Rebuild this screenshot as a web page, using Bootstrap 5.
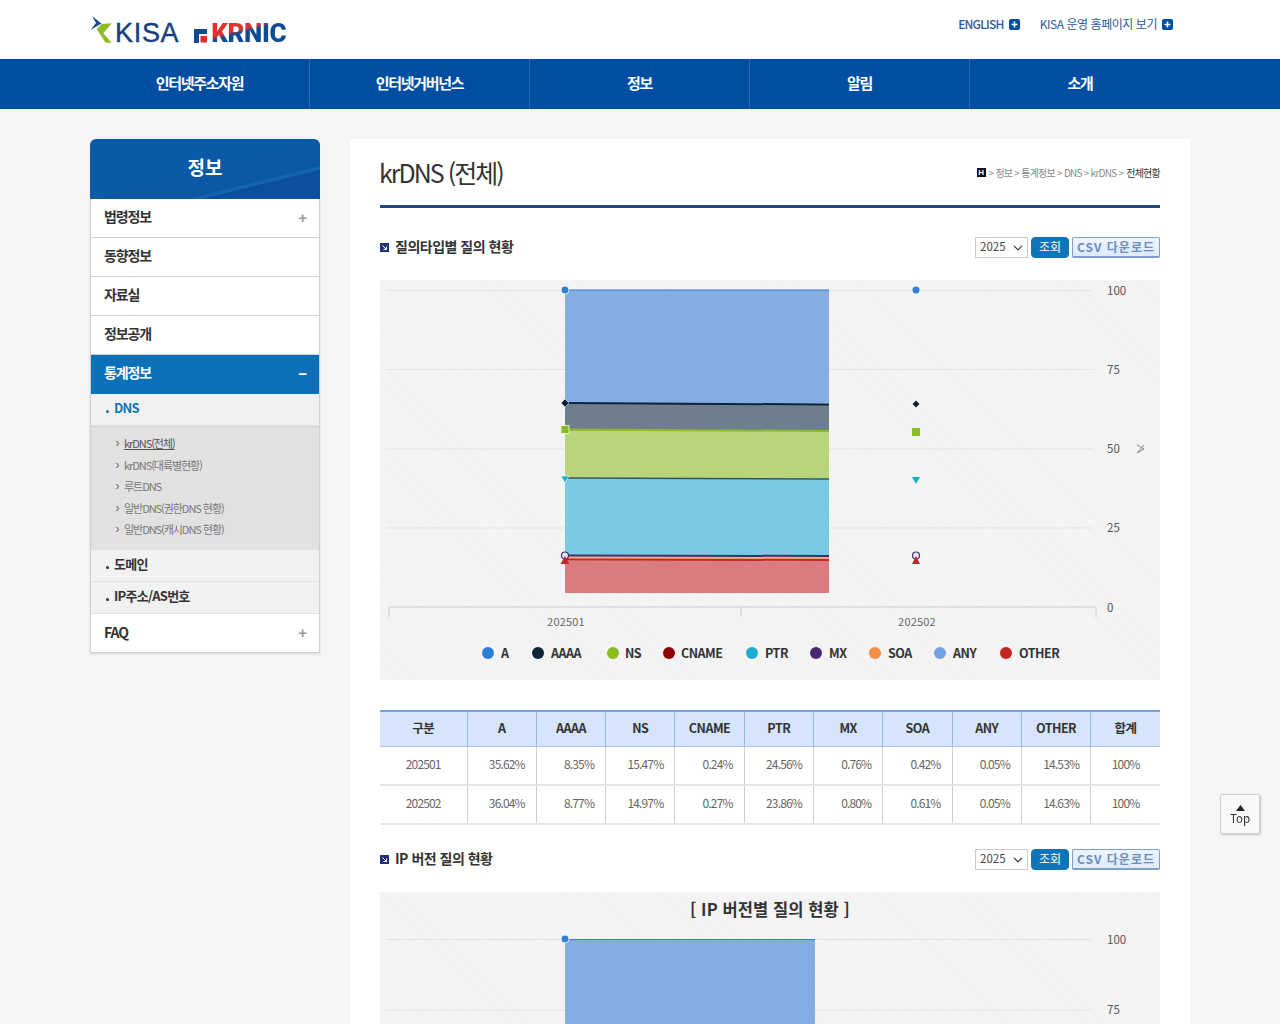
<!DOCTYPE html>
<html lang="ko">
<head>
<meta charset="utf-8">
<title>krDNS (전체)</title>
<link href="https://cdn.jsdelivr.net/npm/bootstrap@5.3.0/dist/css/bootstrap.min.css" rel="stylesheet">
<style>
html,body{background:#f5f5f6;}
body{font-family:"Noto Sans CJK KR","Noto Sans",sans-serif;color:#333;font-size:13px;}
.viewport-clip{height:1024px;overflow:hidden;}
.wrap-wide{width:1100px;margin:0 auto;}
.site-top{background:#fff;height:59px;}
.logo-box{padding-top:16px;gap:15px;}
.kisa-logo{gap:0;height:29px;}
.kisa-word{font:400 27px/1 "Liberation Sans",sans-serif;color:#173f7d;letter-spacing:.7px;margin-left:-1px;padding-top:4px;-webkit-text-stroke:.4px #173f7d;}
.krnic-word{font:900 26px/1 Roboto,"Liberation Sans",sans-serif;letter-spacing:-.4px;background:linear-gradient(165deg,#e1322d 0 42%,#0e4b95 50% 100%);-webkit-background-clip:text;background-clip:text;color:transparent;padding-top:4px;margin-left:-10px;}
.util-links{padding:15px 17px 0 0;gap:20px;}
.util-link{color:#2a5a9c;font-size:12px;letter-spacing:-.45px;text-decoration:none;line-height:18px;gap:5px;}
.util-en{letter-spacing:-.8px;}
.gnb{background:#004ea2;height:50px;}
.gnb-item{width:220px;height:50px;padding-bottom:2px;color:#fff;font-size:15px;font-weight:700;letter-spacing:-1.3px;text-decoration:none;border-right:1px solid #2a69ae;}
.gnb-item:last-child{border-right:0;}
.page-body{padding-top:30px;gap:30px;}
.side-col{width:230px;flex:none;}
.side-title{height:60px;padding-bottom:4px;border-radius:6px 6px 0 0;color:#fff;font-size:19px;font-weight:700;background:linear-gradient(166deg,#0b5aa8 0 52%,#0c57a6 52% 72%,#1563ac 72% 75%,#0b4f9e 75%);}
.side-menu{border-left:1px solid #d0d0d0;border-right:1px solid #d0d0d0;box-shadow:0 1px 2px rgba(0,0,0,.12);}
.side-link{height:39px;padding:0 13px 4px 13px;background:#fff;border-bottom:1px solid #d0d0d0;color:#333;font-size:14px;font-weight:700;letter-spacing:-1.1px;text-decoration:none;}
.side-link.is-open{background:#0a70b8;color:#fff;border-bottom:0;}
.side-link.is-last{padding-bottom:1px;}
.side-sign{color:#999;font-size:15px;font-weight:700;line-height:1;font-family:"Liberation Sans",sans-serif;padding-top:2px;}
.is-open .side-sign{color:#fff;}
.is-last .side-sign{padding-top:0;}
.sub-link{background:#f1f1f1;border-bottom:1px solid #e2e2e2;color:#333;font-size:13px;font-weight:700;letter-spacing:-.75px;text-decoration:none;padding:0 0 3px 15px;height:32px;gap:5px;}
.sub-link.is-on{color:#0a76b5;height:32px;}
.sub-dot{width:3px;height:3px;border-radius:50%;background:currentColor;margin-top:6px;}
.leaf-list{background:#e1e1e1;padding:6.500px 0 10px 24px;box-shadow:inset 0 1px 2px rgba(0,0,0,.06);}
.leaf-link{height:21.500px;color:#777;font-size:11px;letter-spacing:-1.05px;text-decoration:none;gap:4px;}
.leaf-link.is-on{color:#555;}
.leaf-link.is-on span{text-decoration:underline;}
.leaf-mark{width:5px;color:#666;font-size:12px;font-family:"Liberation Sans",sans-serif;line-height:1;letter-spacing:0;text-align:center;}
.main-col{width:840px;flex:none;background:#fff;padding:0 30px;min-height:1000px;}
.title-row{height:69px;border-bottom:3px solid #1a4a8a;}
.page-title{font-size:25px;font-weight:400;letter-spacing:-2px;color:#333;margin:0 0 0 -1px;line-height:1;}
.crumbs{font-size:10px;letter-spacing:-.75px;color:#888;gap:3px;padding-top:1px;}
.crumbs strong{color:#333;font-weight:400;}
.crumb-h{width:9px;height:9px;background:#111;color:#fff;font:700 8px/9px "Liberation Sans",sans-serif;letter-spacing:0;text-align:center;}
.sect-head{height:21px;margin-top:29px;}
.sect-name{font-size:14px;font-weight:700;letter-spacing:-.5px;color:#333;margin:0;gap:6px;line-height:19px;padding-bottom:2px;}
.sect-name svg{margin-top:2px;}
.tool-set{gap:3px;}
.year-pick{width:53px;height:21px;padding:0 0 2px 4px;font-size:11.500px;line-height:17px;border:1px solid #ccc;border-radius:0;background-position:right 3px center;background-size:12px 10px;color:#444;font-family:"Noto Sans CJK KR",sans-serif;}
.find-btn{width:38px;height:21px;padding:0 0 2px;font-size:12px;line-height:17px;background:#0f75b8;border:1px solid #0f75b8;color:#fff;border-radius:4px;}
.csv-btn{width:88px;height:21px;padding:0 0 2px;font-size:12px;font-weight:700;line-height:15px;letter-spacing:1px;background:linear-gradient(#eef4fd,#dfeafa);border:1px solid #7f9fcb;border-bottom-width:2px;color:#6a8db9;border-radius:2px;}
.chart-pane{margin-top:22px;background-color:#f4f4f4;background-image:repeating-linear-gradient(45deg,#f1f1f1 0 1px,#f6f6f6 1px 2px);height:400px;}
.chart-pane svg{display:block;}
.chart-pane text{font-family:"Noto Sans CJK KR","Noto Sans",sans-serif;}
.ax-y{font-size:11.500px;fill:#555;}
.ax-x{font-size:11px;fill:#666;letter-spacing:.2px;}
.lg-t{font-size:12.500px;font-weight:700;fill:#333;letter-spacing:-.5px;}
.chart-cap{font-size:16.500px;font-weight:700;fill:#333;letter-spacing:.1px;}
.stat-table{margin:30px 0 0;table-layout:fixed;width:780px;font-size:12px;letter-spacing:-.85px;color:#666;border-collapse:collapse;}
.stat-table th{background:#d6e5fb;height:35px;padding:0;text-align:center;font-size:12.500px;font-weight:700;color:#333;letter-spacing:-.5px;border-top:2px solid #7a9fe0;border-bottom:1px solid #a9c4ee;border-right:1px solid #9db6dc;vertical-align:middle;}
.stat-table td{height:39px;padding:0 11px 3px 0;text-align:right;border-bottom:2px solid #e6e6e6;border-right:1px solid #cfcfcf;vertical-align:middle;background:#fff;color:#666;}
.stat-table tr>*:last-child{border-right:0;}
.stat-table td:first-child,.stat-table td:last-child{text-align:center;padding-right:0;}
.stat-table .col-head{width:87px;}
.second-head{margin-top:24px;}
.second-head+.chart-pane{margin-top:22px;}
.top-btn{position:fixed;left:1220px;top:794px;width:40px;height:40px;background:#f8f8f8;border:1px solid #d0d0d0;border-radius:2px;box-shadow:1px 1px 2px rgba(0,0,0,.2);color:#333;font-size:11.500px;line-height:1;text-decoration:none;padding-top:10px;gap:2px;}
</style>
</head>
<body>
<div class="viewport-clip">
<header class="site-top">
  <div class="wrap-wide d-flex justify-content-between">
    <div class="logo-box d-flex align-items-start">
      <div class="kisa-logo d-flex align-items-start">
        <svg width="26" height="29" viewBox="0 0 26 29"><polygon points="2,0 11.500,7.500 0.500,14 6,7" fill="#1a4f96"/><polygon points="21.700,7.300 11.500,8 6.700,13.300 15.700,26.700 21.700,26.700 13.300,17.300" fill="#8dbb25"/></svg>
        <span class="kisa-word">KISA</span>
      </div>
      <div class="d-flex align-items-start">
        <svg width="27" height="29" viewBox="0 0 27 29"><path d="M0 13h13v5H5v9H0z" fill="#0e4b95"/><rect x="6.500" y="20" width="6.500" height="6.500" fill="#d9322e"/></svg>
        <span class="krnic-word">KRNIC</span>
      </div>
    </div>
    <div class="util-links d-flex align-items-start">
      <a class="util-link util-en d-flex align-items-center fw-medium" href="#">ENGLISH
        <svg width="11" height="11" viewBox="0 0 11 11"><rect width="11" height="11" rx="2" fill="#004ea2"/><path d="M2.500 5.500h6M5.500 2.500v6" stroke="#fff" stroke-width="1.500"/></svg></a>
      <a class="util-link d-flex align-items-center" href="#">KISA 운영 홈페이지 보기
        <svg width="11" height="11" viewBox="0 0 11 11"><rect width="11" height="11" rx="2" fill="#004ea2"/><path d="M2.500 5.500h6M5.500 2.500v6" stroke="#fff" stroke-width="1.500"/></svg></a>
    </div>
  </div>
</header>
<nav class="gnb">
  <div class="wrap-wide d-flex">
    <a class="gnb-item d-flex align-items-center justify-content-center" href="#">인터넷주소자원</a>
    <a class="gnb-item d-flex align-items-center justify-content-center" href="#">인터넷거버넌스</a>
    <a class="gnb-item d-flex align-items-center justify-content-center" href="#">정보</a>
    <a class="gnb-item d-flex align-items-center justify-content-center" href="#">알림</a>
    <a class="gnb-item d-flex align-items-center justify-content-center" href="#">소개</a>
  </div>
</nav>
<div class="wrap-wide page-body d-flex align-items-start">
  <aside class="side-col">
    <div class="side-title d-flex align-items-center justify-content-center">정보</div>
    <div class="side-menu">
      <a class="side-link d-flex align-items-center justify-content-between" href="#">법령정보<span class="side-sign">+</span></a>
      <a class="side-link d-flex align-items-center" href="#">동향정보</a>
      <a class="side-link d-flex align-items-center" href="#">자료실</a>
      <a class="side-link d-flex align-items-center" href="#">정보공개</a>
      <a class="side-link is-open d-flex align-items-center justify-content-between" href="#">통계정보<span class="side-sign">&minus;</span></a>
      <a class="sub-link is-on d-flex align-items-center" href="#"><i class="sub-dot"></i>DNS</a>
      <div class="leaf-list">
        <a class="leaf-link is-on d-flex align-items-center" href="#"><i class="leaf-mark fst-normal">&rsaquo;</i><span>krDNS(전체)</span></a>
        <a class="leaf-link d-flex align-items-center" href="#"><i class="leaf-mark fst-normal">&rsaquo;</i><span>krDNS(대륙별현황)</span></a>
        <a class="leaf-link d-flex align-items-center" href="#"><i class="leaf-mark fst-normal">&rsaquo;</i><span>루트DNS</span></a>
        <a class="leaf-link d-flex align-items-center" href="#"><i class="leaf-mark fst-normal">&rsaquo;</i><span>일반DNS(권한DNS 현황)</span></a>
        <a class="leaf-link d-flex align-items-center" href="#"><i class="leaf-mark fst-normal">&rsaquo;</i><span>일반DNS(캐시DNS 현황)</span></a>
      </div>
      <a class="sub-link d-flex align-items-center" href="#"><i class="sub-dot"></i>도메인</a>
      <a class="sub-link d-flex align-items-center" href="#"><i class="sub-dot"></i>IP주소/AS번호</a>
      <a class="side-link is-last d-flex align-items-center justify-content-between" href="#">FAQ<span class="side-sign">+</span></a>
    </div>
  </aside>
  <main class="main-col">
    <div class="title-row d-flex align-items-center justify-content-between">
      <h1 class="page-title">krDNS (전체)</h1>
      <div class="crumbs d-flex align-items-center"><span class="crumb-h">H</span><span>&gt; 정보 &gt; 통계정보 &gt; DNS &gt; krDNS &gt;</span><strong>전체현황</strong></div>
    </div>

    <div class="sect-head d-flex align-items-center justify-content-between">
      <h2 class="sect-name d-flex align-items-center">
        <svg width="9" height="9" viewBox="0 0 9 9"><rect width="9" height="9" fill="#1f2f7a"/><path d="M2.500 2.500l4 4M6.500 3.500v3h-3" stroke="#fff" fill="none"/></svg>질의타입별 질의 현황</h2>
      <div class="tool-set d-flex">
        <select class="form-select year-pick" aria-label="연도"><option>2025</option></select>
        <button class="btn find-btn" type="button">조회</button>
        <button class="btn csv-btn" type="button">CSV 다운로드</button>
      </div>
    </div>
    <div class="chart-pane">
      <svg width="780" height="400" viewBox="0 0 780 400">
        <g stroke="#e3e3e3" stroke-width="1"><path d="M6 10.500H712M6 89.500H712M6 169H712M6 248H712"/></g>
        <path d="M9 337v-10h707v10M361 327v10" stroke="#ccc" fill="none"/>
        <rect x="185" y="10" width="264" height="113.500" fill="#84aee3"/>
        <rect x="185" y="124" width="264" height="27" fill="#6f7e8f"/>
        <rect x="185" y="150.500" width="264" height="48" fill="#b9d579"/>
        <rect x="185" y="199" width="264" height="77" fill="#77cae0"/>
        <rect x="185" y="276.500" width="264" height="4" fill="#eeaa80"/>
        <rect x="185" y="280.500" width="264" height="32.500" fill="#d97b7f"/>
        <path d="M185 10H449" stroke="#2f7ed8" stroke-width="1"/>
        <path d="M185 123L449 124.500" stroke="#0d233a" stroke-width="2"/>
        <path d="M185 149.500L449 151" stroke="#8bbc21" stroke-width="2"/>
        <path d="M185 198L449 199" stroke="#33566b" stroke-width="1.500"/>
        <path d="M185 275.500L449 276" stroke="#492970" stroke-width="2"/>
        <path d="M185 279.500L449 280" stroke="#c42525" stroke-width="2"/>
        <circle cx="185" cy="10" r="4" fill="#2f7ed8" stroke="#fff" stroke-width=".8"/>
        <polygon points="185,119 189,123 185,127 181,123" fill="#0d233a" stroke="#fff" stroke-width=".5"/>
        <rect x="181" y="145.500" width="8" height="8" fill="#8bbc21" stroke="#fff" stroke-width=".7"/>
        <polygon points="181,196 189,196 185,203" fill="#1aadce" stroke="#fff" stroke-width=".6"/>
        <circle cx="185" cy="275.500" r="3.500" fill="#dfe8f8" stroke="#492970" stroke-width="1.200"/>
        <polygon points="185,276 189.500,284 180.500,284" fill="#c42525"/>
        <circle cx="536" cy="10" r="3.500" fill="#2f7ed8"/>
        <polygon points="536,120.500 539.500,124 536,127.500 532.500,124" fill="#0d233a"/>
        <rect x="532" y="148" width="8" height="8" fill="#8bbc21"/>
        <polygon points="532,197 540,197 536,204" fill="#1aadce"/>
        <circle cx="536" cy="275.500" r="3.500" fill="#dfe8f8" stroke="#492970" stroke-width="1.200"/>
        <polygon points="536,276 540,284 532,284" fill="#c42525"/>
        <path d="M757 165l7 4-7 4M764 165l-7 8" stroke="#888" fill="none" stroke-width="1"/>
        <text class="ax-y" x="727" y="15">100</text>
        <text class="ax-y" x="727" y="94">75</text>
        <text class="ax-y" x="727" y="173">50</text>
        <text class="ax-y" x="727" y="252">25</text>
        <text class="ax-y" x="727" y="332">0</text>
        <text class="ax-x" x="186" y="346" text-anchor="middle">202501</text>
        <text class="ax-x" x="537" y="346" text-anchor="middle">202502</text>
        <g>
          <circle cx="108" cy="373" r="6" fill="#2f7ed8"/><text class="lg-t" x="121" y="378">A</text>
          <circle cx="158" cy="373" r="6" fill="#0d233a"/><text class="lg-t" x="171" y="378">AAAA</text>
          <circle cx="233" cy="373" r="6" fill="#8bbc21"/><text class="lg-t" x="245" y="378">NS</text>
          <circle cx="289" cy="373" r="6" fill="#910000"/><text class="lg-t" x="301" y="378">CNAME</text>
          <circle cx="372" cy="373" r="6" fill="#1aadce"/><text class="lg-t" x="385" y="378">PTR</text>
          <circle cx="436" cy="373" r="6" fill="#492970"/><text class="lg-t" x="449" y="378">MX</text>
          <circle cx="495" cy="373" r="6" fill="#f28f43"/><text class="lg-t" x="508" y="378">SOA</text>
          <circle cx="560" cy="373" r="6" fill="#77a1e5"/><text class="lg-t" x="573" y="378">ANY</text>
          <circle cx="626" cy="373" r="6" fill="#c42525"/><text class="lg-t" x="639" y="378">OTHER</text>
        </g>
      </svg>
    </div>

    <table class="stat-table">
      <thead>
        <tr><th class="col-head">구분</th><th>A</th><th>AAAA</th><th>NS</th><th>CNAME</th><th>PTR</th><th>MX</th><th>SOA</th><th>ANY</th><th>OTHER</th><th>합계</th></tr>
      </thead>
      <tbody>
        <tr><td>202501</td><td>35.62%</td><td>8.35%</td><td>15.47%</td><td>0.24%</td><td>24.56%</td><td>0.76%</td><td>0.42%</td><td>0.05%</td><td>14.53%</td><td>100%</td></tr>
        <tr><td>202502</td><td>36.04%</td><td>8.77%</td><td>14.97%</td><td>0.27%</td><td>23.86%</td><td>0.80%</td><td>0.61%</td><td>0.05%</td><td>14.63%</td><td>100%</td></tr>
      </tbody>
    </table>

    <div class="sect-head second-head d-flex align-items-center justify-content-between">
      <h2 class="sect-name d-flex align-items-center">
        <svg width="9" height="9" viewBox="0 0 9 9"><rect width="9" height="9" fill="#1f2f7a"/><path d="M2.500 2.500l4 4M6.500 3.500v3h-3" stroke="#fff" fill="none"/></svg>IP 버전 질의 현황</h2>
      <div class="tool-set d-flex">
        <select class="form-select year-pick" aria-label="연도"><option>2025</option></select>
        <button class="btn find-btn" type="button">조회</button>
        <button class="btn csv-btn" type="button">CSV 다운로드</button>
      </div>
    </div>
    <div class="chart-pane">
      <svg width="780" height="400" viewBox="0 0 780 400">
        <text class="chart-cap" x="390" y="24" text-anchor="middle">[ IP 버전별 질의 현황 ]</text>
        <path d="M6 47.500H712M6 118H712" stroke="#e3e3e3"/>
        <rect x="185" y="47" width="250" height="353" fill="#84aee3"/>
        <path d="M185 47.500H435" stroke="#2f7ed8"/>
        <circle cx="185" cy="47" r="4" fill="#2f7ed8" stroke="#fff" stroke-width=".8"/>
        <text class="ax-y" x="727" y="52">100</text>
        <text class="ax-y" x="727" y="122">75</text>
      </svg>
    </div>
  </main>
</div>
</div>
<a class="top-btn d-flex flex-column align-items-center" href="#">
  <svg width="9" height="6" viewBox="0 0 9 6"><polygon points="4.500,0 9,6 0,6" fill="#222"/></svg>Top</a>
<script src="https://cdn.jsdelivr.net/npm/bootstrap@5.3.0/dist/js/bootstrap.bundle.min.js"></script>
</body>
</html>
